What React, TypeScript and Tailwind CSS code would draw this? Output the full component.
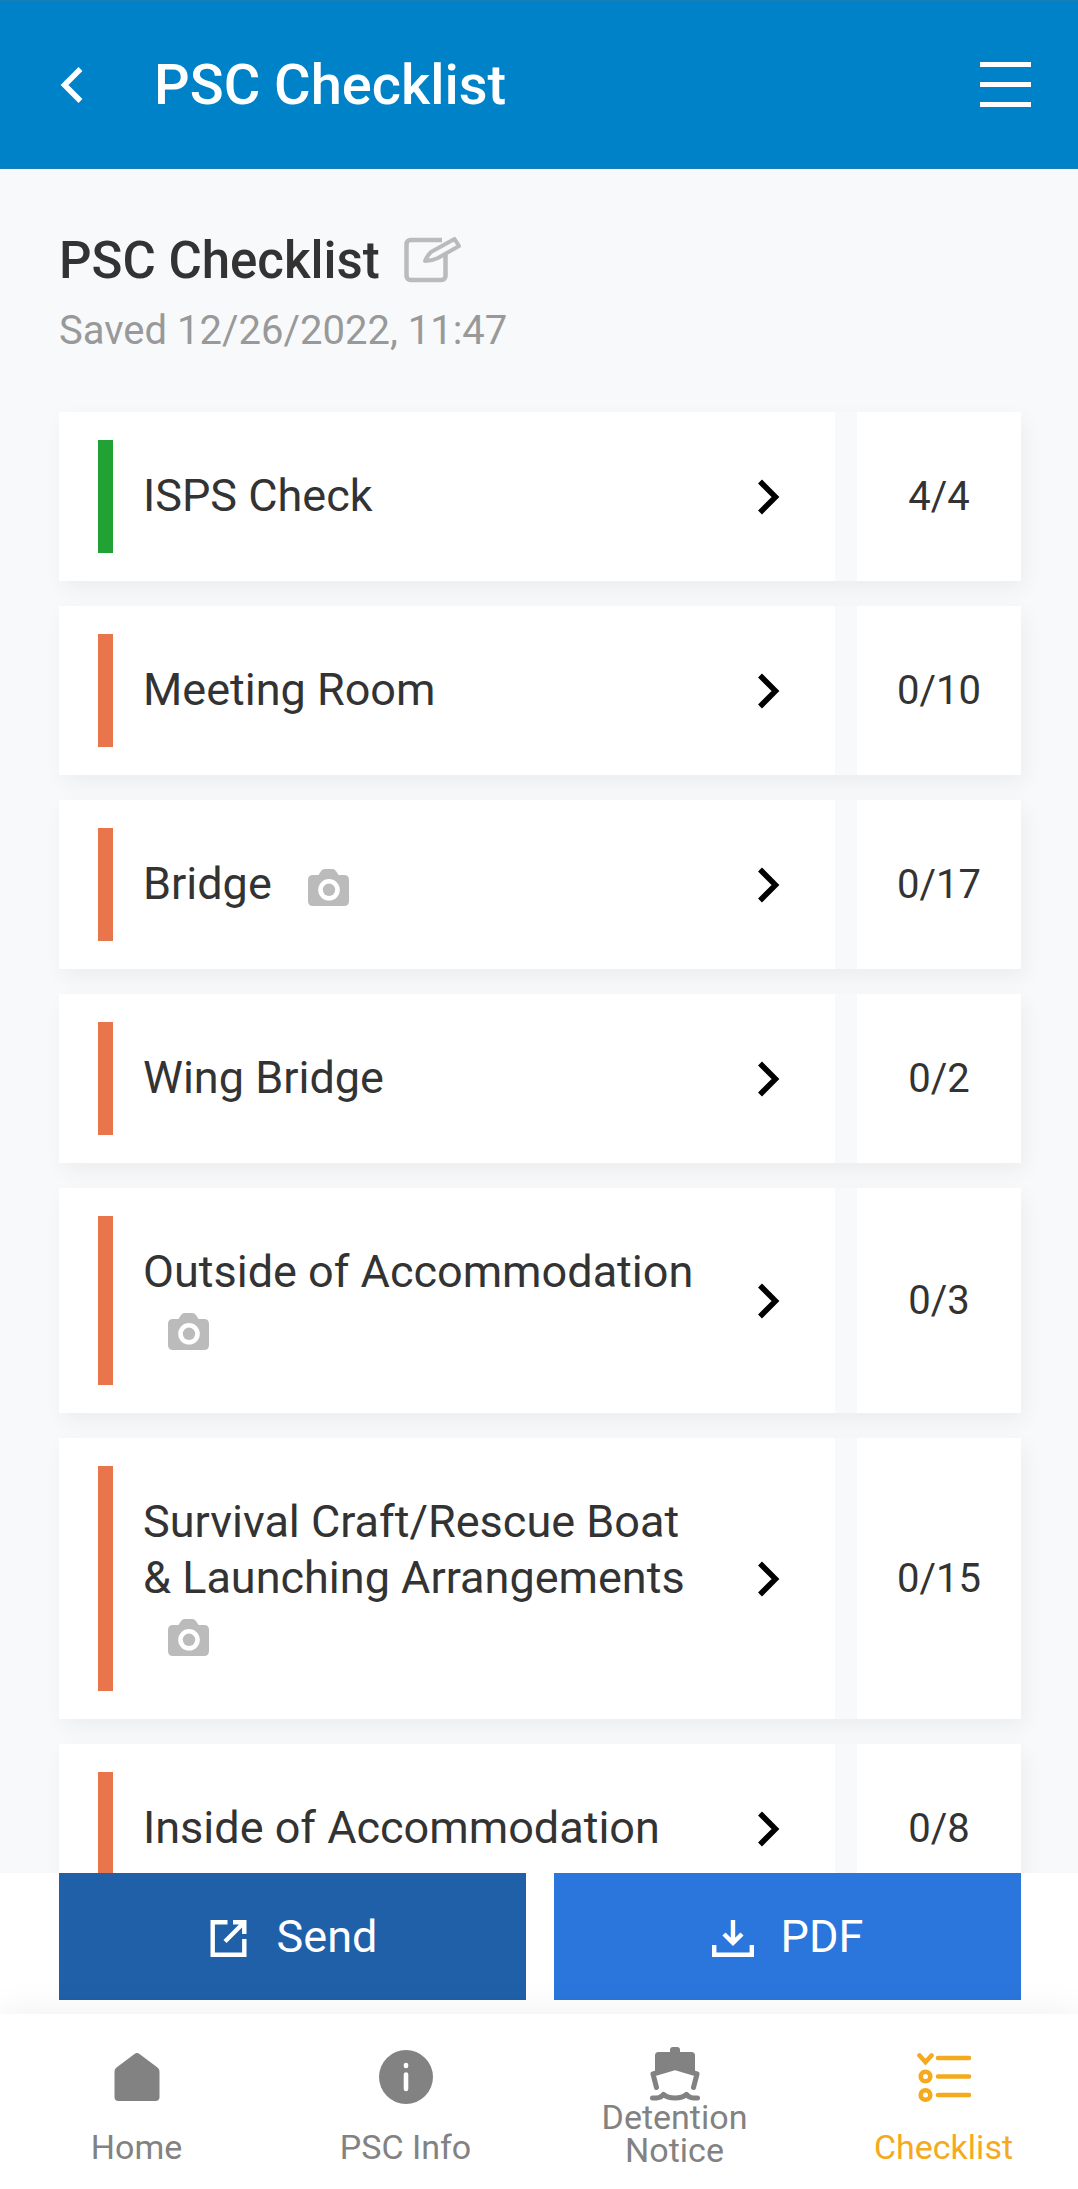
import type { ReactNode } from "react";

type Section = {
  title: string;
  done: number;
  total: number;
  photo?: boolean;
};

const sections: Section[] = [
  { title: "ISPS Check", done: 4, total: 4 },
  { title: "Meeting Room", done: 0, total: 10 },
  { title: "Bridge", done: 0, total: 17, photo: true },
  { title: "Wing Bridge", done: 0, total: 2 },
  { title: "Outside of Accommodation", done: 0, total: 3, photo: true },
  { title: "Survival Craft/Rescue Boat & Launching Arrangements", done: 0, total: 15, photo: true },
  { title: "Inside of Accommodation", done: 0, total: 8 },
];

function CameraIcon() {
  return (
    <svg viewBox="0 0 41 37" className="inline-block w-[41px] h-[37px] ml-[25px] align-middle" role="img" aria-label="Has photos">
      <path
        fill="#bbb"
        fillRule="evenodd"
        d="M5 6h5.500l2.200-3.600Q14.200 0 17 0h7q2.800 0 4.300 2.400L30.500 6H36q5 0 5 5v21q0 5-5 5H5q-5 0-5-5V11q0-5 5-5ZM21 10a10.800 10.800 0 1 0 0 21.600a10.800 10.800 0 1 0 0-21.600Z"
      />
      <circle cx="21" cy="20.800" r="6.200" fill="#bbb" />
    </svg>
  );
}

function ChevronIcon() {
  return (
    <svg viewBox="0 0 22 36" className="w-[22px] h-[36px]" fill="none" stroke="#000" strokeWidth="5.500" aria-hidden="true">
      <path d="M2 2.500 17.500 18 2 33.500" />
    </svg>
  );
}

function SectionRow({ title, done, total, photo }: Section) {
  return (
    <li className="flex gap-[22px] bg-[#f7f9fb] shadow-[4px_8px_20px_rgba(0,0,0,0.05)]">
      <button className="flex flex-1 items-stretch bg-white pl-[39px] py-[28px] text-left">
        <span className={done === total ? "w-[15px] shrink-0 bg-[#20a334]" : "w-[15px] shrink-0 bg-[#e9754d]"} />
        <span className="flex-1 pl-[30px] pt-[28px] pb-[29px] text-[45px] leading-[56px]">
          {title}
          {photo && (
            <>
              {" "}
              <CameraIcon />
            </>
          )}
        </span>
        <span className="flex w-[132px] shrink-0 items-center justify-center">
          <ChevronIcon />
        </span>
      </button>
      <div className="flex w-[164px] items-center justify-center bg-white text-[40px]">
        {done}/{total}
      </div>
    </li>
  );
}

function NavItem({ label, active, children }: { label: string; active?: boolean; children: ReactNode }) {
  return (
    <a
      href="#"
      aria-current={active ? "page" : undefined}
      className={
        active
          ? "flex flex-1 flex-col items-center justify-center text-[#f4aa1c]"
          : "flex flex-1 flex-col items-center justify-center text-[#828282]"
      }
    >
      <svg viewBox="0 0 54 54" className="size-[54px]" fill="currentColor" aria-hidden="true">
        {children}
      </svg>
      <span className="flex min-h-[60px] max-w-[180px] items-end text-center text-[34px] leading-[33px]">{label}</span>
    </a>
  );
}

export default function App() {
  return (
    <div className="flex h-screen flex-col bg-[#f8f9fb] text-[#333] font-[Roboto,sans-serif]">
      <header className="flex h-[169px] shrink-0 items-center border-y border-[#1a7db5] bg-[#0082c8] pl-[60px] pr-[47px] text-white">
        <button aria-label="Back">
          <svg viewBox="0 0 24 38" className="w-[24px] h-[38px]" fill="none" stroke="currentColor" strokeWidth="5.500" aria-hidden="true">
            <path d="M20.500 3 4.500 19l16 16" />
          </svg>
        </button>
        <h1 className="ml-[70px] flex-1 text-[56px] font-medium">PSC Checklist</h1>
        <button aria-label="Menu" className="flex flex-col gap-[15px]">
          <span className="h-[5px] w-[51px] bg-white" />
          <span className="h-[5px] w-[51px] bg-white" />
          <span className="h-[5px] w-[51px] bg-white" />
        </button>
      </header>

      <main className="min-h-0 flex-1 overflow-y-auto pl-[59px] pr-[57px] pt-[62px] [scrollbar-width:none]">
        <div className="flex items-center gap-[24px]">
          <h2 className="text-[51px] leading-[60px] font-medium">PSC Checklist</h2>
          <button aria-label="Rename">
            <svg viewBox="0 1 58 48" className="w-[58px] h-[48px]" fill="none" stroke="#bbb" strokeWidth="4.500" strokeLinejoin="round" aria-hidden="true">
              <path d="M38 4H6.500a4 4 0 0 0-4 4v32a4 4 0 0 0 4 4h31a4 4 0 0 0 4-4V18" />
              <path d="M21 25q2-5 6-9L50.500 3 55 10 34 22q-6 3-13 3Z" strokeWidth="4" />
            </svg>
          </button>
        </div>
        <p className="mt-[16px] text-[40px] leading-[48px] text-[#999]">Saved 12/26/2022, 11:47</p>

        <ul className="mt-[57px] flex flex-col gap-[25px]">
          {sections.map((section) => (
            <SectionRow key={section.title} {...section} />
          ))}
        </ul>
      </main>

      <div className="flex shrink-0 gap-[28px] bg-white pb-[14px] pl-[59px] pr-[57px] text-[45px] text-white">
        <button className="flex h-[127px] flex-1 items-center justify-center gap-[27px] bg-[#1f60a9]">
          <svg viewBox="0 0 42 42" className="size-[42px]" fill="none" stroke="currentColor" strokeWidth="4.400" aria-hidden="true">
            <path d="M19.500 6.200H4.700v32.600h31.600V23M25 6.200h11.300V18M35.500 7 17 25.500" />
          </svg>
          Send
        </button>
        <button className="flex h-[127px] flex-1 items-center justify-center gap-[27px] bg-[#2b76dc]">
          <svg viewBox="0 0 42 42" className="size-[42px]" fill="none" stroke="currentColor" strokeWidth="4.400" aria-hidden="true">
            <path d="M2.200 29v9.800h37.600V29M21 4v23M12 18l9 9 9-9" />
          </svg>
          PDF
        </button>
      </div>

      <nav className="relative flex h-[175px] shrink-0 bg-white pl-[2px] pt-[10px] shadow-[0_0_36px_rgba(0,0,0,0.07)]">
        <NavItem label="Home">
          <path d="M24.500 4q2.500-2 5 0L47.500 17.500q2 1.500 2 4V47q0 4-4 4h-37q-4 0-4-4V21.500q0-2.500 2-4Z" />
        </NavItem>
        <NavItem label="PSC Info">
          <circle cx="27" cy="27" r="27" />
          <path d="M27 24.500V39M27 15v1" fill="none" stroke="#fff" strokeWidth="4.600" strokeLinecap="round" />
        </NavItem>
        <NavItem label="Detention Notice">
          <path d="M7 25V8.500Q7 5 10.500 5H22V3q0-3 3-3h4q3 0 3 3v2h11.500Q47 5 47 8.500V25L27 20Z" />
          <path
            d="M8.500 40.500 5 27l22-6.500L49 27l-3.500 13.500M4.500 51c5 0 8 0 11-3.500 4 3.500 8 3.500 11.500 3.500s7.500 0 11.500-3.500c3 3.500 6 3.500 11 3.500"
            fill="none"
            stroke="currentColor"
            strokeWidth="5"
            strokeLinecap="round"
            strokeLinejoin="round"
          />
        </NavItem>
        <NavItem label="Checklist" active>
          <g fill="none" stroke="currentColor" strokeWidth="4.600" strokeLinecap="round">
            <path d="M2.500 5.500 8.500 12l6-6.500M21 8h31M21 26.500h31M21 45h31" />
            <circle cx="8.500" cy="26.500" r="4.800" />
            <circle cx="8.500" cy="45" r="4.800" />
          </g>
        </NavItem>
      </nav>
    </div>
  );
}
